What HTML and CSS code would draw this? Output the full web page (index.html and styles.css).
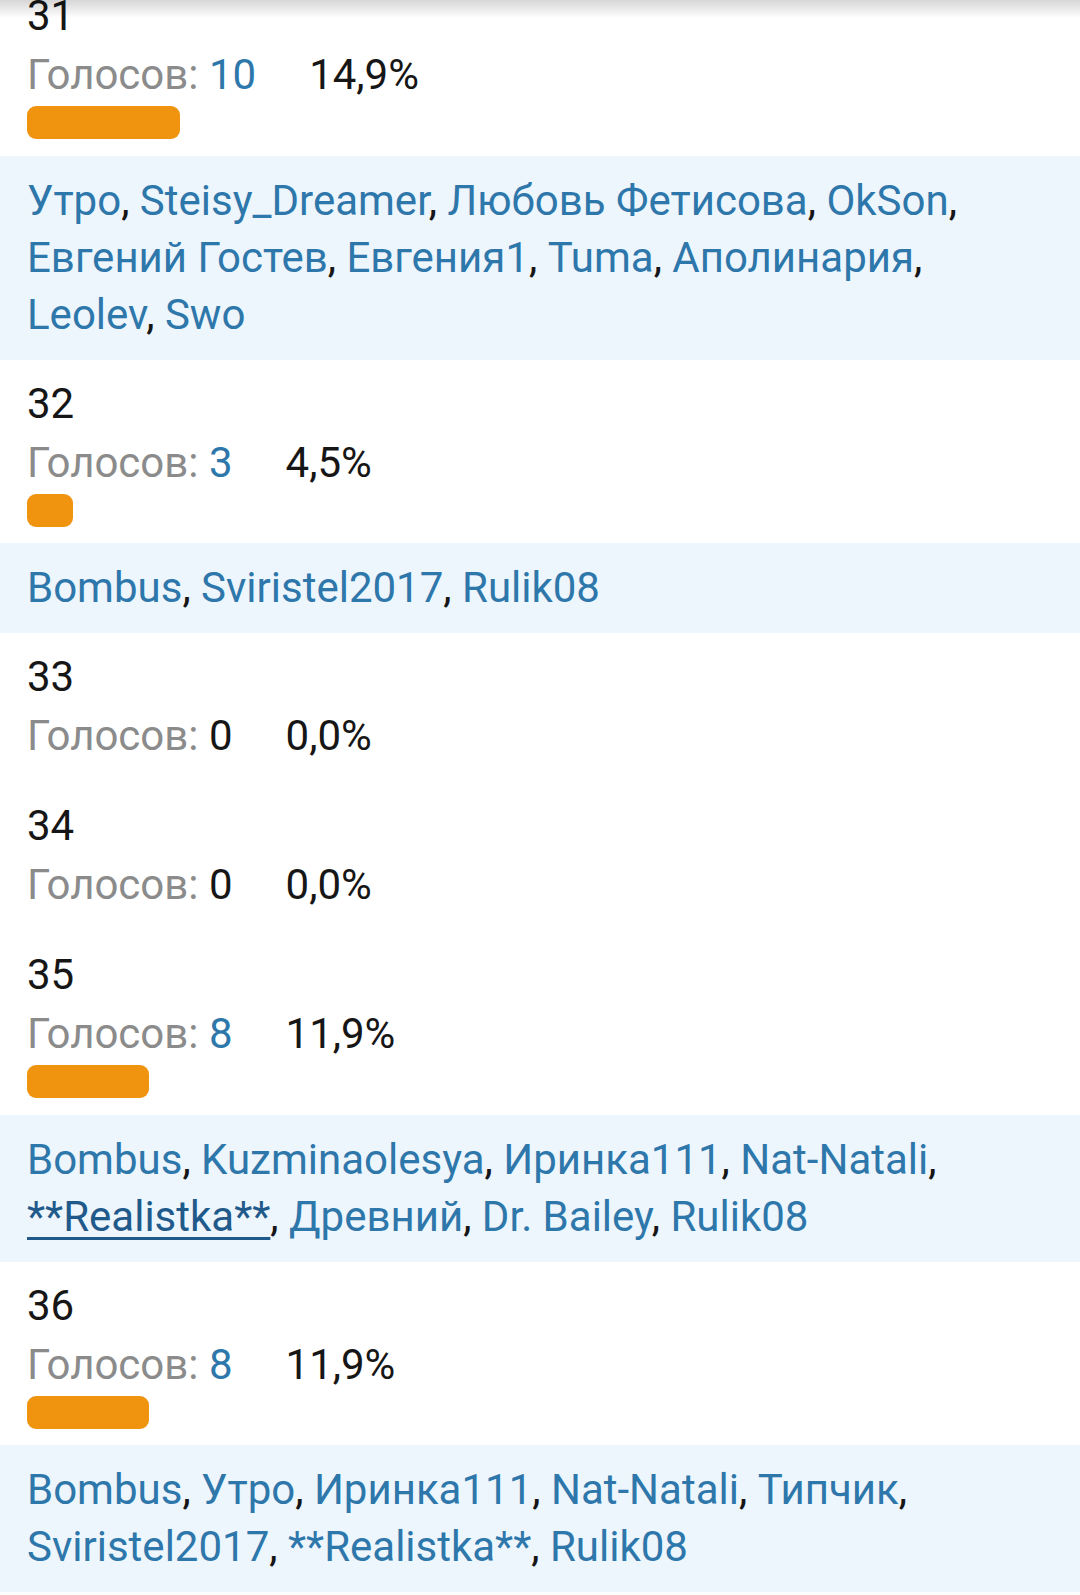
FILE: index.html
```html
<!DOCTYPE html>
<html lang="ru">
<head>
<meta charset="utf-8">
<title>Опрос</title>
<link rel="stylesheet" href="styles.css">
</head>
<body>
<div class="topshade"></div>
<div class="poll">
  <div class="option">
    <div class="num">31</div>
    <div class="votes"><span class="label">Голосов:</span> <span class="count link">10</span><span class="pct">14,9%</span></div>
    <div class="bar" style="width:14.9%"></div>
  </div>
  <div class="voters"><a class="user">Утро</a>, <a class="user">Steisy_Dreamer</a>, <a class="user">Любовь Фетисова</a>, <a class="user">OkSon</a>, <a class="user">Евгений Гостев</a>, <a class="user">Евгения1</a>, <a class="user">Tuma</a>, <a class="user">Аполинария</a>, <a class="user">Leolev</a>, <a class="user">Swo</a></div>

  <div class="option">
    <div class="num">32</div>
    <div class="votes"><span class="label">Голосов:</span> <span class="count link">3</span><span class="pct">4,5%</span></div>
    <div class="bar" style="width:4.5%"></div>
  </div>
  <div class="voters"><a class="user">Bombus</a>, <a class="user">Sviristel2017</a>, <a class="user">Rulik08</a></div>

  <div class="option">
    <div class="num">33</div>
    <div class="votes"><span class="label">Голосов:</span> <span class="count">0</span><span class="pct">0,0%</span></div>
  </div>

  <div class="option">
    <div class="num">34</div>
    <div class="votes"><span class="label">Голосов:</span> <span class="count">0</span><span class="pct">0,0%</span></div>
  </div>

  <div class="option">
    <div class="num">35</div>
    <div class="votes"><span class="label">Голосов:</span> <span class="count link">8</span><span class="pct">11,9%</span></div>
    <div class="bar" style="width:11.9%"></div>
  </div>
  <div class="voters"><a class="user">Bombus</a>, <a class="user">Kuzminaolesya</a>, <a class="user">Иринка111</a>, <a class="user">Nat-Natali</a>, <a class="user active">**Realistka**</a>, <a class="user">Древний</a>, <a class="user">Dr. Bailey</a>, <a class="user">Rulik08</a></div>

  <div class="option">
    <div class="num">36</div>
    <div class="votes"><span class="label">Голосов:</span> <span class="count link">8</span><span class="pct">11,9%</span></div>
    <div class="bar" style="width:11.9%"></div>
  </div>
  <div class="voters"><a class="user">Bombus</a>, <a class="user">Утро</a>, <a class="user">Иринка111</a>, <a class="user">Nat-Natali</a>, <a class="user">Типчик</a>, <a class="user">Sviristel2017</a>, <a class="user">**Realistka**</a>, <a class="user">Rulik08</a></div>
</div>
</body>
</html>
```

FILE: styles.css
```css
html, body {
  margin: 0;
  padding: 0;
  background: #ffffff;
}
body {
  font-family: Roboto, "Noto Sans", "Liberation Sans", sans-serif;
  font-size: 42px;
  color: #161616;
  overflow: hidden;
}
.topshade {
  position: fixed;
  top: 0;
  left: 0;
  right: 0;
  height: 18px;
  background: linear-gradient(to bottom, rgba(0,0,0,0.16), rgba(0,0,0,0));
  pointer-events: none;
}
.poll {
  margin-top: -28px;
}
.option {
  padding: 15px 26px 16px 27px;
}
.num {
  line-height: 58px;
}
.votes {
  line-height: 60px;
}
.label {
  color: #8b8b8b;
}
.count.link {
  color: #2d77ab;
}
.pct {
  margin-left: 53px;
}
.bar {
  height: 33px;
  margin-top: 1px;
  margin-bottom: 0.5px;
  background: #f0930f;
  border-radius: 9px;
}
.voters {
  background: #edf5fd;
  padding: 16px 25px 17px 27px;
  line-height: 57px;
  color: #161616;
}
.user {
  color: #2d77ab;
  text-decoration: none;
}
.user.active {
  color: #1f5a8a;
  text-decoration: underline;
  text-decoration-thickness: 3px;
  text-underline-offset: 6px;
}
```
